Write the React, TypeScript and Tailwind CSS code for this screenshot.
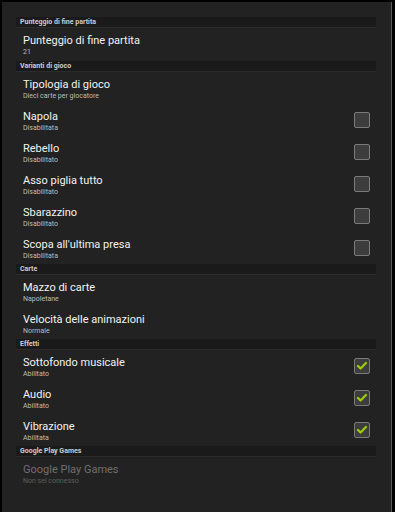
import { Check } from 'lucide-react';

type Pref = {
  title: string;
  summary: string;
  checkbox?: boolean;
  checked?: boolean;
  disabled?: boolean;
};

type Section = { header: string; items: Pref[] };

const sections: Section[] = [
  {
    header: 'Punteggio di fine partita',
    items: [{ title: 'Punteggio di fine partita', summary: '21' }],
  },
  {
    header: 'Varianti di gioco',
    items: [
      { title: 'Tipologia di gioco', summary: 'Dieci carte per giocatore' },
      { title: 'Napola', summary: 'Disabilitata', checkbox: true },
      { title: 'Rebello', summary: 'Disabilitato', checkbox: true },
      { title: 'Asso piglia tutto', summary: 'Disabilitato', checkbox: true },
      { title: 'Sbarazzino', summary: 'Disabilitato', checkbox: true },
      { title: "Scopa all'ultima presa", summary: 'Disabilitata', checkbox: true },
    ],
  },
  {
    header: 'Carte',
    items: [
      { title: 'Mazzo di carte', summary: 'Napoletane' },
      { title: 'Velocità delle animazioni', summary: 'Normale' },
    ],
  },
  {
    header: 'Effetti',
    items: [
      { title: 'Sottofondo musicale', summary: 'Abilitato', checkbox: true, checked: true },
      { title: 'Audio', summary: 'Abilitato', checkbox: true, checked: true },
      { title: 'Vibrazione', summary: 'Abilitata', checkbox: true, checked: true },
    ],
  },
  {
    header: 'Google Play Games',
    items: [{ title: 'Google Play Games', summary: 'Non sei connesso', disabled: true }],
  },
];

function CheckBox({ checked }: { checked?: boolean }) {
  return (
    <div className="w-[16px] h-[16px] rounded-[2px] border border-[#7a7a7a] bg-[#3d3d3d] flex items-center justify-center">
      {checked && <Check className="w-[12px] h-[12px] text-[#9ccc0a]" strokeWidth={4.5} />}
    </div>
  );
}

export default function App() {
  return (
    <div
      className="w-[395px] h-[512px] bg-black pl-[2px] pt-[2px] pr-[3px] overflow-hidden"
      style={{ fontFamily: 'Roboto, "Liberation Sans", sans-serif' }}
    >
      <div className="h-full bg-[#222222] border-r border-[#5a5a5a] pt-[15px]">
        {sections.map((section, si) => (
          <div key={section.header}>
            <div className="ml-[14px] mr-[15px] h-[11px] bg-[#1a1a1a] border-b border-[#2b2b2b] flex items-center pl-[4px]">
              <span className="text-[7px] font-bold text-[#cccccc] leading-none">{section.header}</span>
            </div>
            {section.items.map((item) => (
              <div
                key={item.title}
                className={`${si === 0 ? 'h-[33px]' : 'h-[32px]'} flex items-center pl-[21px] pr-[21px]`}
              >
                <div className="flex-1 flex flex-col pt-[2px]">
                  <span
                    className={`text-[11px] leading-[13px] ${item.disabled ? 'text-[#6f6f6f]' : 'text-[#f2f2f2]'}`}
                  >
                    {item.title}
                  </span>
                  <span
                    className={`text-[7px] leading-[10px] ${item.disabled ? 'text-[#5e5e5e]' : 'text-[#bdbdbd]'}`}
                  >
                    {item.summary}
                  </span>
                </div>
                {item.checkbox && <CheckBox checked={item.checked} />}
              </div>
            ))}
          </div>
        ))}
      </div>
    </div>
  );
}
